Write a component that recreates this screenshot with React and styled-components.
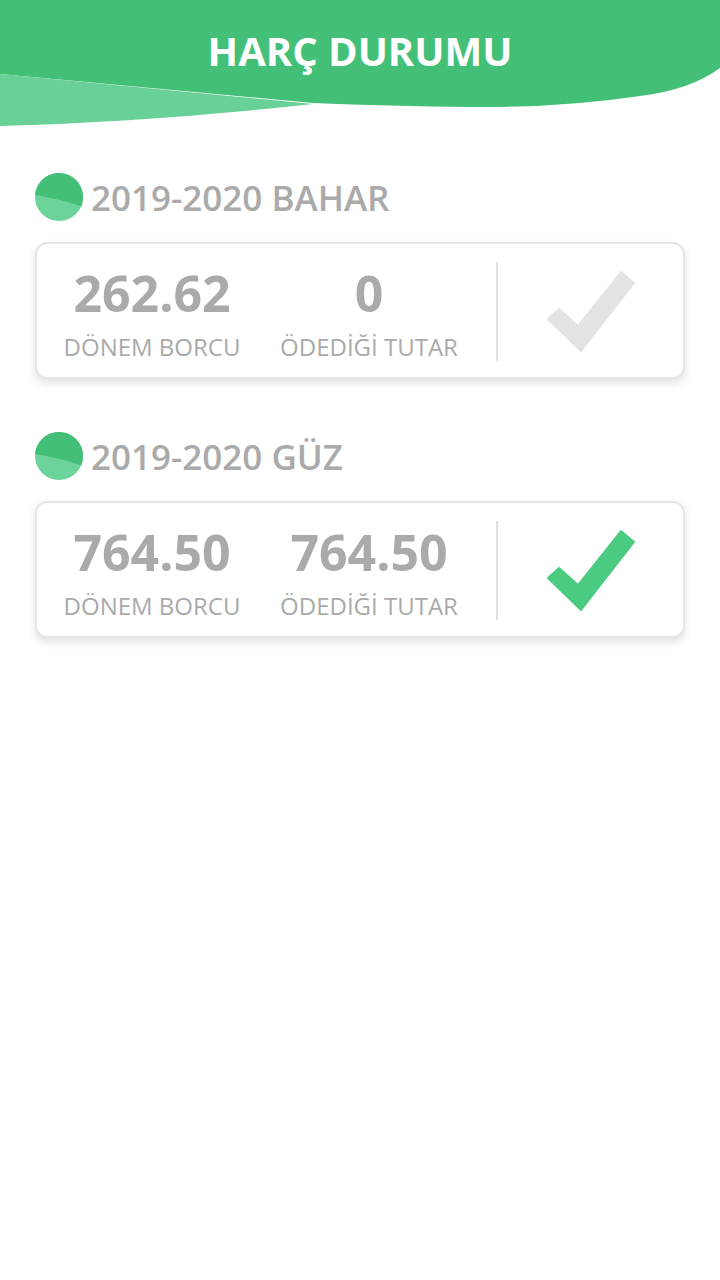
import React from "react"
import styled, { createGlobalStyle } from "styled-components"

const GlobalStyle = createGlobalStyle`
  body {
    margin: 0;
    background: #fff;
    font-family: "Open Sans", "Noto Sans", sans-serif;
  }
`

const Page = styled.div`
  width: 720px;
  min-height: 1280px;
  background: #fff;
`

// green wave header
const Header = styled.header`
  position: relative;
  height: 126px;
  .wave {
    position: absolute;
    inset: 0;
  }
`

const Title = styled.h1`
  position: relative;
  margin: 0;
  padding-top: 27px;
  text-align: center;
  color: #fff;
  font-size: 40px;
  font-weight: 700;
  line-height: 1.2;
`

const Content = styled.main`
  padding: 47px 35px 0;
`

const Section = styled.section`
  margin-bottom: 53px;
`

const SectionTitle = styled.div`
  display: flex;
  align-items: center;
  gap: 8px;
  height: 48px;
  color: #aaaaaa;
  font-size: 35px;
  font-weight: 600;
`

const Card = styled.div`
  margin-top: 21px;
  display: flex;
  align-items: stretch;
  padding: 18px 0 16px 15px;
  border: 2px solid #e6e6e6;
  border-radius: 12px;
  background: #fff;
  box-shadow: 0 4px 8px rgba(0, 0, 0, 0.12);
`

const Stats = styled.div`
  display: grid;
  grid-template-columns: 200px 200px;
  column-gap: 17px;
  align-items: center;
`

const Stat = styled.div`
  display: flex;
  flex-direction: column;
  align-items: center;
  color: #aaaaaa;
  .value {
    font-size: 50px;
    font-weight: 700;
    line-height: 60px;
    margin-top: 1px;
  }
  .label {
    margin-top: 9px;
    font-size: 24px;
    font-weight: 400;
    line-height: 29px;
    white-space: nowrap;
  }
`

const Divider = styled.div`
  width: 2px;
  margin-left: 27px;
  background: #e0e0e0;
`

const CheckBox = styled.div`
  flex: 1;
  display: flex;
  align-items: center;
  justify-content: center;
`

const Dot = () => (
  <svg width="48" height="48" viewBox="0 0 48 48">
    <defs>
      <clipPath id="dotclip">
        <circle cx="24" cy="24" r="24" />
      </clipPath>
    </defs>
    <g clipPath="url(#dotclip)">
      <rect width="48" height="48" fill="#6cd39a" />
      <path d="M0 0 H48 V34 Q26 26 0 22 Z" fill="#43bf77" />
    </g>
  </svg>
)

const Check = ({ paid }) => {
  const color = paid ? "#4bcb81" : "#e3e3e3"
  return (
    <svg width="90" height="84" viewBox="0 0 90 84">
      <polygon
        points="2,49 13,39 32,56 75,2 88,13 35,81"
        fill={color}
        stroke={color}
        strokeWidth="2"
        strokeLinejoin="round"
      />
    </svg>
  )
}

const terms = [
  { name: "2019-2020 BAHAR", debt: "262.62", paid: "0", done: false },
  { name: "2019-2020 GÜZ", debt: "764.50", paid: "764.50", done: true },
]

const App = () => {
  return (
    <>
      <GlobalStyle />
      <Page>
        <Header>
          <svg className="wave" width="720" height="126" viewBox="0 0 720 126">
            <path d="M0 74 L313 104 Q150 122 0 126 Z" fill="#69d098" />
            <path d="M0 0 H720 V68 Q690 90 640 96 Q560 108 470 107 Q390 106 313 103 L0 74 Z" fill="#43bf77" />
          </svg>
          <Title>HARÇ DURUMU</Title>
        </Header>
        <Content>
          {terms.map((t) => (
            <Section key={t.name}>
              <SectionTitle>
                <Dot />
                <span>{t.name}</span>
              </SectionTitle>
              <Card>
                <Stats>
                  <Stat>
                    <span className="value">{t.debt}</span>
                    <span className="label">DÖNEM BORCU</span>
                  </Stat>
                  <Stat>
                    <span className="value">{t.paid}</span>
                    <span className="label">ÖDEDİĞİ TUTAR</span>
                  </Stat>
                </Stats>
                <Divider />
                <CheckBox>
                  <Check paid={t.done} />
                </CheckBox>
              </Card>
            </Section>
          ))}
        </Content>
      </Page>
    </>
  )
}

export default App
